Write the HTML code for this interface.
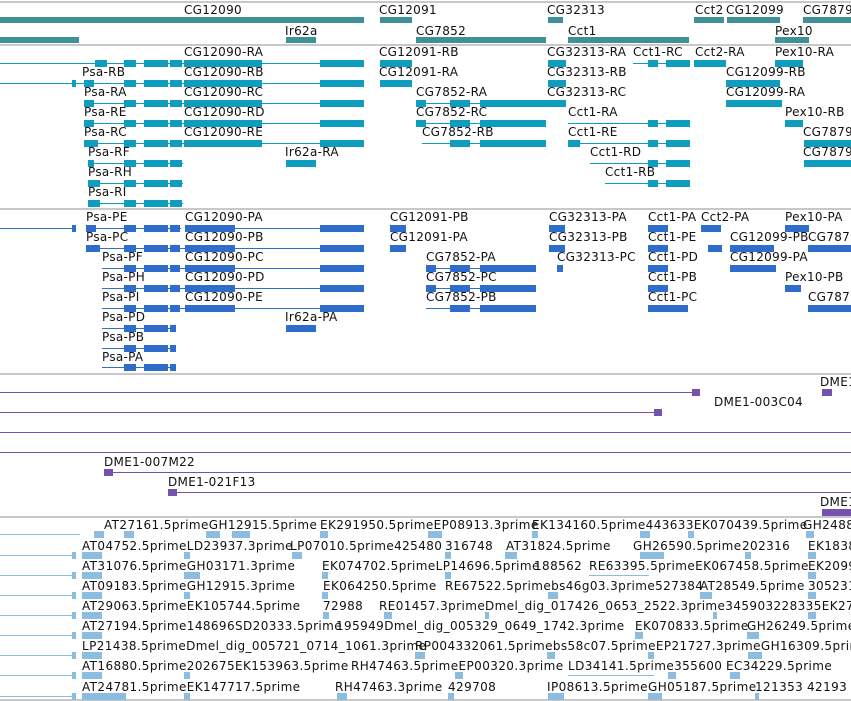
<!DOCTYPE html>
<html><head><meta charset="utf-8"><style>
body{margin:0;width:851px;height:701px;overflow:hidden;background:#fff;position:relative;font-family:"DejaVu Sans","Liberation Sans",sans-serif;font-size:12px;color:#111}
div{position:absolute}
.t{white-space:nowrap;line-height:14px;letter-spacing:0.3px}
.est .t{letter-spacing:0.4px}
.s{left:0;width:851px;height:2px;background:#c8c8c8}
.g{background:#3f9196;height:6px}
.x{background:#0e9dbf}
.p{background:#2f6dcc}
.u{background:#7452ad}
.e{background:#8bbde0}
.l{height:1px}
.b{height:7px}
</style></head><body>
<div class="s" style="top:1px"></div>
<div class="s" style="top:44px"></div>
<div class="s" style="top:208px"></div>
<div class="s" style="top:373px"></div>
<div class="s" style="top:516px"></div>
<div class="s" style="top:699px"></div>

<!-- genes -->
<div class="t" style="left:184px;top:3px">CG12090</div>
<div class="t" style="left:379px;top:3px">CG12091</div>
<div class="t" style="left:547px;top:3px">CG32313</div>
<div class="t" style="left:695px;top:3px">Cct2</div>
<div class="t" style="left:726px;top:3px">CG12099</div>
<div class="t" style="left:803px;top:3px">CG7879</div>
<div class="g" style="left:0;top:17px;width:364px"></div>
<div class="g" style="left:380px;top:17px;width:32px"></div>
<div class="g" style="left:548px;top:17px;width:15px"></div>
<div class="g" style="left:694px;top:17px;width:30px"></div>
<div class="g" style="left:727px;top:17px;width:53px"></div>
<div class="g" style="left:803px;top:17px;width:48px"></div>
<div class="t" style="left:285px;top:24px">Ir62a</div>
<div class="t" style="left:416px;top:24px">CG7852</div>
<div class="t" style="left:568px;top:24px">Cct1</div>
<div class="t" style="left:775px;top:24px">Pex10</div>
<div class="g" style="left:0;top:37px;width:79px"></div>
<div class="g" style="left:286px;top:37px;width:30px"></div>
<div class="g" style="left:416px;top:37px;width:130px"></div>
<div class="g" style="left:568px;top:37px;width:121px"></div>
<div class="g" style="left:775px;top:37px;width:34px"></div>

<!-- transcripts -->
<div class="t" style="left:184px;top:45px">CG12090-RA</div>
<div class="t" style="left:379px;top:45px">CG12091-RB</div>
<div class="t" style="left:547px;top:45px">CG32313-RA</div>
<div class="t" style="left:633px;top:45px">Cct1-RC</div>
<div class="t" style="left:695px;top:45px">Cct2-RA</div>
<div class="t" style="left:775px;top:45px">Pex10-RA</div>
<div class="x l" style="left:0;top:63px;width:364px"></div>
<div class="x b" style="left:95px;top:60px;width:12px"></div><div class="x b" style="left:124px;top:60px;width:12px"></div><div class="x b" style="left:144px;top:60px;width:24px"></div><div class="x b" style="left:170px;top:60px;width:12px"></div><div class="x b" style="left:184px;top:60px;width:48px"></div><div class="x b" style="left:232px;top:60px;width:30px"></div><div class="x b" style="left:320px;top:60px;width:44px"></div>
<div class="x b" style="left:380px;top:60px;width:32px"></div>
<div class="x b" style="left:548px;top:60px;width:18px"></div>
<div class="x l" style="left:633px;top:63px;width:57px"></div><div class="x b" style="left:648px;top:60px;width:10px"></div><div class="x b" style="left:666px;top:60px;width:24px"></div>
<div class="x b" style="left:694px;top:60px;width:32px"></div>
<div class="x b" style="left:775px;top:60px;width:28px"></div>

<div class="t" style="left:82px;top:65px">Psa-RB</div>
<div class="t" style="left:184px;top:65px">CG12090-RB</div>
<div class="t" style="left:379px;top:65px">CG12091-RA</div>
<div class="t" style="left:547px;top:65px">CG32313-RB</div>
<div class="t" style="left:726px;top:65px">CG12099-RB</div>
<div class="x l" style="left:0;top:83px;width:364px"></div>
<div class="x b" style="left:72px;top:80px;width:4px"></div><div class="x b" style="left:84px;top:80px;width:10px"></div><div class="x b" style="left:124px;top:80px;width:12px"></div><div class="x b" style="left:144px;top:80px;width:24px"></div><div class="x b" style="left:170px;top:80px;width:12px"></div><div class="x b" style="left:184px;top:80px;width:48px"></div><div class="x b" style="left:232px;top:80px;width:30px"></div><div class="x b" style="left:320px;top:80px;width:44px"></div>
<div class="x b" style="left:380px;top:80px;width:32px"></div>
<div class="x b" style="left:548px;top:80px;width:18px"></div>
<div class="x b" style="left:726px;top:80px;width:54px"></div>

<div class="t" style="left:84px;top:85px">Psa-RA</div>
<div class="t" style="left:184px;top:85px">CG12090-RC</div>
<div class="t" style="left:416px;top:85px">CG7852-RA</div>
<div class="t" style="left:547px;top:85px">CG32313-RC</div>
<div class="t" style="left:726px;top:85px">CG12099-RA</div>
<div class="x l" style="left:84px;top:103px;width:280px"></div>
<div class="x b" style="left:84px;top:100px;width:10px"></div><div class="x b" style="left:124px;top:100px;width:12px"></div><div class="x b" style="left:144px;top:100px;width:24px"></div><div class="x b" style="left:170px;top:100px;width:12px"></div><div class="x b" style="left:184px;top:100px;width:48px"></div><div class="x b" style="left:232px;top:100px;width:30px"></div><div class="x b" style="left:320px;top:100px;width:44px"></div>
<div class="x l" style="left:416px;top:103px;width:130px"></div><div class="x b" style="left:416px;top:100px;width:10px"></div><div class="x b" style="left:450px;top:100px;width:20px"></div><div class="x b" style="left:480px;top:100px;width:66px"></div>
<div class="x b" style="left:540px;top:100px;width:26px"></div>
<div class="x b" style="left:726px;top:100px;width:56px"></div>

<div class="t" style="left:84px;top:105px">Psa-RE</div>
<div class="t" style="left:184px;top:105px">CG12090-RD</div>
<div class="t" style="left:416px;top:105px">CG7852-RC</div>
<div class="t" style="left:568px;top:105px">Cct1-RA</div>
<div class="t" style="left:785px;top:105px">Pex10-RB</div>
<div class="x l" style="left:84px;top:123px;width:280px"></div>
<div class="x b" style="left:84px;top:120px;width:10px"></div><div class="x b" style="left:124px;top:120px;width:12px"></div><div class="x b" style="left:144px;top:120px;width:24px"></div><div class="x b" style="left:170px;top:120px;width:12px"></div><div class="x b" style="left:184px;top:120px;width:48px"></div><div class="x b" style="left:232px;top:120px;width:30px"></div><div class="x b" style="left:320px;top:120px;width:44px"></div>
<div class="x l" style="left:416px;top:123px;width:130px"></div><div class="x b" style="left:416px;top:120px;width:10px"></div><div class="x b" style="left:450px;top:120px;width:20px"></div><div class="x b" style="left:480px;top:120px;width:66px"></div>
<div class="x l" style="left:568px;top:123px;width:122px"></div><div class="x b" style="left:648px;top:120px;width:10px"></div><div class="x b" style="left:666px;top:120px;width:24px"></div>
<div class="x b" style="left:785px;top:120px;width:18px"></div>

<div class="t" style="left:84px;top:125px">Psa-RC</div>
<div class="t" style="left:184px;top:125px">CG12090-RE</div>
<div class="t" style="left:422px;top:125px">CG7852-RB</div>
<div class="t" style="left:568px;top:125px">Cct1-RE</div>
<div class="t" style="left:803px;top:125px">CG7879</div>
<div class="x l" style="left:84px;top:143px;width:280px"></div>
<div class="x b" style="left:84px;top:140px;width:14px"></div><div class="x b" style="left:124px;top:140px;width:12px"></div><div class="x b" style="left:144px;top:140px;width:24px"></div><div class="x b" style="left:170px;top:140px;width:12px"></div><div class="x b" style="left:184px;top:140px;width:48px"></div><div class="x b" style="left:232px;top:140px;width:30px"></div><div class="x b" style="left:320px;top:140px;width:44px"></div>
<div class="x l" style="left:422px;top:143px;width:124px"></div><div class="x b" style="left:450px;top:140px;width:20px"></div><div class="x b" style="left:480px;top:140px;width:66px"></div>
<div class="x b" style="left:540px;top:140px;width:6px"></div>
<div class="x l" style="left:568px;top:143px;width:122px"></div><div class="x b" style="left:568px;top:140px;width:12px"></div><div class="x b" style="left:648px;top:140px;width:10px"></div><div class="x b" style="left:666px;top:140px;width:24px"></div>
<div class="x b" style="left:804px;top:140px;width:47px"></div>

<div class="t" style="left:88px;top:145px">Psa-RF</div>
<div class="t" style="left:285px;top:145px">Ir62a-RA</div>
<div class="t" style="left:590px;top:145px">Cct1-RD</div>
<div class="t" style="left:803px;top:145px">CG7879</div>
<div class="x l" style="left:88px;top:163px;width:95px"></div><div class="x b" style="left:88px;top:160px;width:6px"></div><div class="x b" style="left:124px;top:160px;width:12px"></div><div class="x b" style="left:144px;top:160px;width:24px"></div><div class="x b" style="left:170px;top:160px;width:12px"></div>
<div class="x b" style="left:286px;top:160px;width:30px"></div>
<div class="x l" style="left:590px;top:163px;width:100px"></div><div class="x b" style="left:648px;top:160px;width:10px"></div><div class="x b" style="left:666px;top:160px;width:24px"></div>
<div class="x b" style="left:804px;top:160px;width:47px"></div>

<div class="t" style="left:88px;top:165px">Psa-RH</div>
<div class="t" style="left:605px;top:165px">Cct1-RB</div>
<div class="x l" style="left:88px;top:183px;width:95px"></div><div class="x b" style="left:88px;top:180px;width:12px"></div><div class="x b" style="left:124px;top:180px;width:12px"></div><div class="x b" style="left:144px;top:180px;width:24px"></div><div class="x b" style="left:170px;top:180px;width:12px"></div>
<div class="x l" style="left:605px;top:183px;width:85px"></div><div class="x b" style="left:648px;top:180px;width:10px"></div><div class="x b" style="left:666px;top:180px;width:24px"></div>

<div class="t" style="left:88px;top:185px">Psa-RI</div>
<div class="x l" style="left:88px;top:203px;width:95px"></div><div class="x b" style="left:88px;top:200px;width:12px"></div><div class="x b" style="left:124px;top:200px;width:12px"></div><div class="x b" style="left:144px;top:200px;width:24px"></div><div class="x b" style="left:170px;top:200px;width:12px"></div>

<!-- proteins -->
<div class="t" style="left:86px;top:210px">Psa-PE</div>
<div class="t" style="left:185px;top:210px">CG12090-PA</div>
<div class="t" style="left:390px;top:210px">CG12091-PB</div>
<div class="t" style="left:549px;top:210px">CG32313-PA</div>
<div class="t" style="left:648px;top:210px">Cct1-PA</div>
<div class="t" style="left:701px;top:210px">Cct2-PA</div>
<div class="t" style="left:785px;top:210px">Pex10-PA</div>
<div class="p l" style="left:0;top:228px;width:76px"></div><div class="p b" style="left:72px;top:225px;width:4px"></div>
<div class="p l" style="left:86px;top:228px;width:95px"></div><div class="p b" style="left:86px;top:225px;width:10px"></div><div class="p b" style="left:124px;top:225px;width:12px"></div><div class="p b" style="left:144px;top:225px;width:24px"></div><div class="p b" style="left:170px;top:225px;width:10px"></div>
<div class="p l" style="left:185px;top:228px;width:179px"></div><div class="p b" style="left:185px;top:225px;width:50px"></div><div class="p b" style="left:320px;top:225px;width:44px"></div>
<div class="p b" style="left:390px;top:225px;width:16px"></div>
<div class="p b" style="left:549px;top:225px;width:16px"></div>
<div class="p b" style="left:648px;top:225px;width:20px"></div>
<div class="p b" style="left:701px;top:225px;width:20px"></div>
<div class="p b" style="left:785px;top:225px;width:24px"></div>

<div class="t" style="left:86px;top:230px">Psa-PC</div>
<div class="t" style="left:185px;top:230px">CG12090-PB</div>
<div class="t" style="left:390px;top:230px">CG12091-PA</div>
<div class="t" style="left:549px;top:230px">CG32313-PB</div>
<div class="t" style="left:648px;top:230px">Cct1-PE</div>
<div class="t" style="left:730px;top:230px">CG12099-PB</div>
<div class="t" style="left:808px;top:230px">CG7879</div>
<div class="p l" style="left:86px;top:248px;width:278px"></div><div class="p b" style="left:86px;top:245px;width:14px"></div><div class="p b" style="left:124px;top:245px;width:12px"></div><div class="p b" style="left:144px;top:245px;width:24px"></div><div class="p b" style="left:170px;top:245px;width:10px"></div><div class="p b" style="left:185px;top:245px;width:50px"></div><div class="p b" style="left:320px;top:245px;width:44px"></div>
<div class="p b" style="left:390px;top:245px;width:16px"></div>
<div class="p b" style="left:549px;top:245px;width:16px"></div>
<div class="p b" style="left:648px;top:245px;width:20px"></div>
<div class="p b" style="left:708px;top:245px;width:14px"></div><div class="p b" style="left:730px;top:245px;width:44px"></div>
<div class="p b" style="left:808px;top:245px;width:43px"></div>

<div class="t" style="left:102px;top:250px">Psa-PF</div>
<div class="t" style="left:185px;top:250px">CG12090-PC</div>
<div class="t" style="left:426px;top:250px">CG7852-PA</div>
<div class="t" style="left:557px;top:250px">CG32313-PC</div>
<div class="t" style="left:648px;top:250px">Cct1-PD</div>
<div class="t" style="left:730px;top:250px">CG12099-PA</div>
<div class="p l" style="left:102px;top:268px;width:262px"></div><div class="p b" style="left:124px;top:265px;width:12px"></div><div class="p b" style="left:144px;top:265px;width:24px"></div><div class="p b" style="left:170px;top:265px;width:10px"></div><div class="p b" style="left:185px;top:265px;width:50px"></div><div class="p b" style="left:320px;top:265px;width:44px"></div>
<div class="p l" style="left:426px;top:268px;width:110px"></div><div class="p b" style="left:426px;top:265px;width:10px"></div><div class="p b" style="left:450px;top:265px;width:20px"></div><div class="p b" style="left:480px;top:265px;width:56px"></div>
<div class="p b" style="left:557px;top:265px;width:6px"></div>
<div class="p b" style="left:648px;top:265px;width:20px"></div>
<div class="p b" style="left:730px;top:265px;width:46px"></div>

<div class="t" style="left:102px;top:270px">Psa-PH</div>
<div class="t" style="left:185px;top:270px">CG12090-PD</div>
<div class="t" style="left:426px;top:270px">CG7852-PC</div>
<div class="t" style="left:648px;top:270px">Cct1-PB</div>
<div class="t" style="left:785px;top:270px">Pex10-PB</div>
<div class="p l" style="left:102px;top:288px;width:262px"></div><div class="p b" style="left:124px;top:285px;width:12px"></div><div class="p b" style="left:144px;top:285px;width:24px"></div><div class="p b" style="left:170px;top:285px;width:10px"></div><div class="p b" style="left:185px;top:285px;width:50px"></div><div class="p b" style="left:320px;top:285px;width:44px"></div>
<div class="p l" style="left:426px;top:288px;width:110px"></div><div class="p b" style="left:426px;top:285px;width:10px"></div><div class="p b" style="left:450px;top:285px;width:20px"></div><div class="p b" style="left:480px;top:285px;width:56px"></div>
<div class="p b" style="left:648px;top:285px;width:20px"></div>
<div class="p b" style="left:785px;top:285px;width:16px"></div>

<div class="t" style="left:102px;top:290px">Psa-PI</div>
<div class="t" style="left:185px;top:290px">CG12090-PE</div>
<div class="t" style="left:426px;top:290px">CG7852-PB</div>
<div class="t" style="left:648px;top:290px">Cct1-PC</div>
<div class="t" style="left:808px;top:290px">CG7879</div>
<div class="p l" style="left:102px;top:308px;width:262px"></div><div class="p b" style="left:124px;top:305px;width:12px"></div><div class="p b" style="left:144px;top:305px;width:24px"></div><div class="p b" style="left:170px;top:305px;width:10px"></div><div class="p b" style="left:185px;top:305px;width:50px"></div><div class="p b" style="left:320px;top:305px;width:44px"></div>
<div class="p l" style="left:426px;top:308px;width:110px"></div><div class="p b" style="left:450px;top:305px;width:20px"></div><div class="p b" style="left:480px;top:305px;width:56px"></div>
<div class="p b" style="left:648px;top:305px;width:40px"></div>
<div class="p b" style="left:808px;top:305px;width:43px"></div>

<div class="t" style="left:102px;top:310px">Psa-PD</div>
<div class="t" style="left:285px;top:310px">Ir62a-PA</div>
<div class="p l" style="left:102px;top:328px;width:74px"></div><div class="p b" style="left:124px;top:325px;width:12px"></div><div class="p b" style="left:144px;top:325px;width:24px"></div><div class="p b" style="left:170px;top:325px;width:6px"></div>
<div class="p b" style="left:286px;top:325px;width:30px"></div>
<div class="t" style="left:102px;top:330px">Psa-PB</div>
<div class="p l" style="left:102px;top:348px;width:74px"></div><div class="p b" style="left:124px;top:345px;width:12px"></div><div class="p b" style="left:144px;top:345px;width:24px"></div><div class="p b" style="left:170px;top:345px;width:6px"></div>
<div class="t" style="left:102px;top:350px">Psa-PA</div>
<div class="p l" style="left:102px;top:367px;width:74px"></div><div class="p b" style="left:124px;top:364px;width:12px"></div><div class="p b" style="left:144px;top:364px;width:24px"></div><div class="p b" style="left:170px;top:364px;width:6px"></div>

<!-- clones -->
<div class="t" style="left:820px;top:375px">DME1</div>
<div class="u l" style="left:0;top:392px;width:700px"></div><div class="u b" style="left:692px;top:389px;width:8px"></div>
<div class="u b" style="left:822px;top:389px;width:10px"></div>
<div class="t" style="left:714px;top:395px">DME1-003C04</div>
<div class="u l" style="left:0;top:412px;width:662px"></div><div class="u b" style="left:654px;top:409px;width:8px"></div>
<div class="u l" style="left:0;top:432px;width:851px"></div>
<div class="u l" style="left:0;top:452px;width:851px"></div>
<div class="t" style="left:104px;top:455px">DME1-007M22</div>
<div class="u l" style="left:104px;top:472px;width:747px"></div><div class="u b" style="left:104px;top:469px;width:9px"></div>
<div class="t" style="left:168px;top:475px">DME1-021F13</div>
<div class="u l" style="left:168px;top:492px;width:683px"></div><div class="u b" style="left:168px;top:489px;width:9px"></div>
<div class="t" style="left:820px;top:495px">DME1</div>
<div class="u b" style="left:822px;top:509px;width:29px"></div>

<!-- ESTs -->
<div class="est" style="left:0;top:0;width:851px;height:701px;overflow:hidden">
<div class="t" style="left:104px;top:518px">AT27161.5primeGH12915.5prime</div>
<div class="t" style="left:320px;top:518px">EK291950.5primeEP08913.3prime</div>
<div class="t" style="left:532px;top:518px">EK134160.5prime443633EK070439.5prime</div>
<div class="t" style="left:803px;top:518px">GH2488</div>
<div class="t" style="left:82px;top:539px">AT04752.5primeLD23937.3prime</div>
<div class="t" style="left:290px;top:539px">LP07010.5prime425480</div>
<div class="t" style="left:445px;top:539px">316748</div>
<div class="t" style="left:506px;top:539px">AT31824.5prime</div>
<div class="t" style="left:633px;top:539px">GH26590.5prime</div>
<div class="t" style="left:742px;top:539px">202316</div>
<div class="t" style="left:808px;top:539px">EK1838</div>
<div class="t" style="left:82px;top:559px">AT31076.5primeGH03171.3prime</div>
<div class="t" style="left:322px;top:559px">EK074702.5primeLP14696.5prime</div>
<div class="t" style="left:534px;top:559px">188562</div>
<div class="t" style="left:589px;top:559px">RE63395.5primeEK067458.5prime</div>
<div class="t" style="left:808px;top:559px">EK2099</div>
<div class="t" style="left:82px;top:579px">AT09183.5primeGH12915.3prime</div>
<div class="t" style="left:323px;top:579px">EK064250.5prime</div>
<div class="t" style="left:445px;top:579px">RE67522.5primebs46g03.3prime527384</div>
<div class="t" style="left:700px;top:579px">AT28549.5prime</div>
<div class="t" style="left:808px;top:579px">305231</div>
<div class="t" style="left:82px;top:599px">AT29063.5primeEK105744.5prime</div>
<div class="t" style="left:323px;top:599px">72988</div>
<div class="t" style="left:379px;top:599px">RE01457.3prime</div>
<div class="t" style="left:485px;top:599px">Dmel_dig_017426_0653_2522.3prime345903228335EK2704</div>
<div class="t" style="left:82px;top:619px">AT27194.5prime148696SD20333.5prime</div>
<div class="t" style="left:336px;top:619px">195949Dmel_dig_005329_0649_1742.3prime</div>
<div class="t" style="left:635px;top:619px">EK070833.5prime</div>
<div class="t" style="left:747px;top:619px">GH26249.5prime</div>
<div class="t" style="left:82px;top:639px">LP21438.5primeDmel_dig_005721_0714_1061.3prime</div>
<div class="t" style="left:415px;top:639px">RP004332061.5primebs58c07.5primeEP21727.3primeGH16309.5prime</div>
<div class="t" style="left:82px;top:659px">AT16880.5prime202675EK153963.5prime</div>
<div class="t" style="left:351px;top:659px">RH47463.5primeEP00320.3prime</div>
<div class="t" style="left:568px;top:659px">LD34141.5prime355600</div>
<div class="t" style="left:726px;top:659px">EC34229.5prime</div>
<div class="t" style="left:82px;top:680px">AT24781.5primeEK147717.5prime</div>
<div class="t" style="left:335px;top:680px">RH47463.3prime</div>
<div class="t" style="left:448px;top:680px">429708</div>
<div class="t" style="left:547px;top:680px">IP08613.5prime</div>
<div class="t" style="left:648px;top:680px">GH05187.5prime</div>
<div class="t" style="left:755px;top:680px">121353</div>
<div class="t" style="left:807px;top:680px">42193</div>
</div>

<div class="e l" style="left:0;top:534px;width:80px"></div><div class="e b" style="left:94px;top:531px;width:10px"></div><div class="e b" style="left:124px;top:531px;width:10px"></div><div class="e b" style="left:206px;top:531px;width:14px"></div><div class="e b" style="left:232px;top:531px;width:18px"></div><div class="e b" style="left:320px;top:531px;width:8px"></div><div class="e b" style="left:428px;top:531px;width:14px"></div><div class="e b" style="left:532px;top:531px;width:6px"></div><div class="e b" style="left:640px;top:531px;width:10px"></div><div class="e b" style="left:688px;top:531px;width:6px"></div><div class="e b" style="left:806px;top:531px;width:8px"></div>
<div class="e l" style="left:0;top:555px;width:75px"></div><div class="e b" style="left:72px;top:552px;width:4px"></div><div class="e b" style="left:82px;top:552px;width:20px"></div><div class="e b" style="left:184px;top:552px;width:6px"></div><div class="e b" style="left:292px;top:552px;width:10px"></div><div class="e b" style="left:445px;top:552px;width:6px"></div><div class="e b" style="left:505px;top:552px;width:12px"></div><div class="e b" style="left:640px;top:552px;width:24px"></div><div class="e b" style="left:745px;top:552px;width:6px"></div><div class="e b" style="left:808px;top:552px;width:8px"></div>
<div class="e l" style="left:0;top:575px;width:75px"></div><div class="e b" style="left:72px;top:572px;width:4px"></div><div class="e b" style="left:82px;top:572px;width:20px"></div><div class="e b" style="left:184px;top:572px;width:16px"></div><div class="e b" style="left:322px;top:572px;width:6px"></div><div class="e b" style="left:445px;top:572px;width:6px"></div><div class="e l" style="left:589px;top:575px;width:60px"></div><div class="e b" style="left:808px;top:572px;width:8px"></div>
<div class="e l" style="left:0;top:595px;width:75px"></div><div class="e b" style="left:72px;top:592px;width:4px"></div><div class="e b" style="left:82px;top:592px;width:20px"></div><div class="e b" style="left:184px;top:592px;width:6px"></div><div class="e b" style="left:322px;top:592px;width:6px"></div><div class="e b" style="left:548px;top:592px;width:10px"></div><div class="e b" style="left:700px;top:592px;width:12px"></div><div class="e b" style="left:808px;top:592px;width:8px"></div>
<div class="e l" style="left:0;top:615px;width:75px"></div><div class="e b" style="left:72px;top:612px;width:4px"></div><div class="e b" style="left:82px;top:612px;width:20px"></div><div class="e b" style="left:323px;top:612px;width:6px"></div><div class="e b" style="left:384px;top:612px;width:8px"></div><div class="e b" style="left:485px;top:612px;width:4px"></div><div class="e b" style="left:713px;top:612px;width:4px"></div><div class="e b" style="left:808px;top:612px;width:8px"></div>
<div class="e l" style="left:0;top:635px;width:75px"></div><div class="e b" style="left:72px;top:632px;width:4px"></div><div class="e b" style="left:82px;top:632px;width:20px"></div><div class="e b" style="left:635px;top:632px;width:8px"></div><div class="e b" style="left:747px;top:632px;width:12px"></div>
<div class="e l" style="left:0;top:655px;width:75px"></div><div class="e b" style="left:72px;top:652px;width:4px"></div><div class="e b" style="left:82px;top:652px;width:20px"></div><div class="e b" style="left:415px;top:652px;width:10px"></div><div class="e b" style="left:547px;top:652px;width:8px"></div><div class="e b" style="left:648px;top:652px;width:6px"></div><div class="e b" style="left:748px;top:652px;width:14px"></div>
<div class="e l" style="left:0;top:675px;width:75px"></div><div class="e b" style="left:72px;top:672px;width:4px"></div><div class="e b" style="left:82px;top:672px;width:20px"></div><div class="e b" style="left:184px;top:672px;width:6px"></div><div class="e b" style="left:455px;top:672px;width:8px"></div><div class="e l" style="left:568px;top:675px;width:86px"></div><div class="e b" style="left:668px;top:672px;width:8px"></div><div class="e b" style="left:730px;top:672px;width:10px"></div>
<div class="e l" style="left:0;top:696px;width:75px"></div><div class="e b" style="left:72px;top:693px;width:4px"></div><div class="e b" style="left:82px;top:693px;width:44px"></div><div class="e b" style="left:184px;top:693px;width:6px"></div><div class="e b" style="left:337px;top:693px;width:10px"></div><div class="e b" style="left:448px;top:693px;width:6px"></div><div class="e b" style="left:548px;top:693px;width:16px"></div><div class="e b" style="left:648px;top:693px;width:14px"></div><div class="e b" style="left:755px;top:693px;width:4px"></div>
</body></html>
